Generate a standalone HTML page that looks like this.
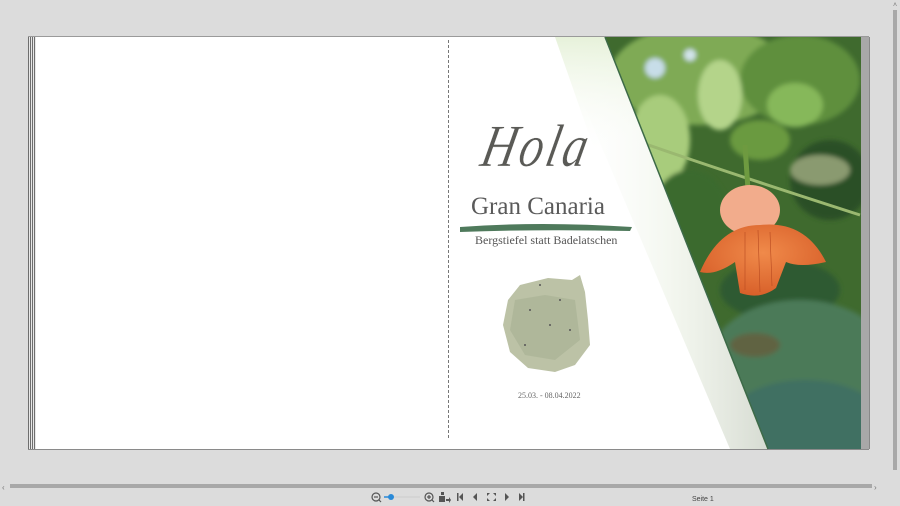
<!DOCTYPE html>
<html><head><meta charset="utf-8"><style>
html,body{margin:0;padding:0;width:900px;height:506px;background:#dcdcdc;overflow:hidden;font-family:"Liberation Sans",sans-serif;}
.abs{position:absolute;}
</style></head><body>
<div class="abs" style="left:28px;top:36px;width:841px;height:414px;background:#fff;border-top:1px solid #9a9a9a;border-bottom:1px solid #8a8a8a;box-sizing:border-box;"></div>
<div class="abs" style="left:28px;top:37px;width:8px;height:412px;background:repeating-linear-gradient(90deg,#6e6e6e 0 1px,#e8e8e8 1px 2px);"></div>
<div class="abs" style="left:448px;top:40px;height:398px;border-left:1px dashed #777;"></div>
<div class="abs" style="left:861px;top:37px;width:8px;height:412px;background:#a8a8a8;border-right:1px solid #888;"></div>
<svg class="abs" style="left:0;top:0" width="900" height="506">
<defs>
<linearGradient id="fade" x1="0" y1="0" x2="1" y2="0">
<stop offset="0" stop-color="#fff" stop-opacity="0"/>
<stop offset="0.55" stop-color="#eef3e8" stop-opacity="0.7"/>
<stop offset="1" stop-color="#d6dbd2"/>
</linearGradient>
<linearGradient id="fade2" x1="0" y1="0" x2="0" y2="1">
<stop offset="0" stop-color="#e4f0d6" stop-opacity="0.9"/>
<stop offset="0.5" stop-color="#fff" stop-opacity="0"/>
<stop offset="1" stop-color="#fff" stop-opacity="0"/>
</linearGradient>
<radialGradient id="fl" cx="0.5" cy="0.4" r="0.6"><stop offset="0" stop-color="#f08a4a"/><stop offset="1" stop-color="#d8602a"/></radialGradient>
<clipPath id="ph"><polygon points="605,37 861,37 861,449 768,449"/></clipPath>
<filter id="bl"><feGaussianBlur stdDeviation="2.5"/></filter>
</defs>
<polygon points="555,37 605,37 768,449 730,449" fill="url(#fade)"/>
<polygon points="555,37 605,37 700,280 640,280" fill="url(#fade2)"/>
<g clip-path="url(#ph)">
<rect x="600" y="37" width="262" height="412" fill="#3f6a2e"/>
<g filter="url(#bl)">
<ellipse cx="700" cy="75" rx="90" ry="50" fill="#7faa55"/>
<ellipse cx="800" cy="80" rx="60" ry="45" fill="#5f8f3c"/>
<circle cx="655" cy="68" r="10" fill="#c7dde8"/>
<circle cx="690" cy="55" r="6" fill="#d2e4ea"/>
<ellipse cx="660" cy="140" rx="30" ry="45" fill="#a8cc7c"/>
<ellipse cx="720" cy="95" rx="22" ry="35" fill="#b4d48a"/>
<ellipse cx="795" cy="105" rx="28" ry="22" fill="#86b85a"/>
<ellipse cx="760" cy="140" rx="30" ry="20" fill="#6a9a40"/>
<ellipse cx="830" cy="180" rx="40" ry="40" fill="#2c4f26"/>
<ellipse cx="690" cy="220" rx="40" ry="50" fill="#3a6a2e"/>
<ellipse cx="780" cy="290" rx="60" ry="30" fill="#2e5a30"/>
<ellipse cx="800" cy="360" rx="90" ry="60" fill="#4c7a58"/>
<ellipse cx="805" cy="425" rx="80" ry="45" fill="#3f7062"/>
<ellipse cx="755" cy="345" rx="25" ry="12" fill="#6a5a3a" opacity="0.7"/>
<ellipse cx="820" cy="170" rx="30" ry="15" fill="#8a9a70"/>
</g>
<path d="M640 142 Q720 170 860 215" stroke="#9ab870" stroke-width="3" fill="none"/>
<path d="M745 145 L748 190" stroke="#6e9a40" stroke-width="5"/>
<ellipse cx="750" cy="210" rx="30" ry="25" fill="#f2ac8c"/>
<path d="M700 272 Q720 225 760 225 Q805 220 826 262 Q800 268 786 262 L776 288 Q760 300 740 293 L735 262 Q715 276 700 272Z" fill="url(#fl)"/>
<g stroke="#b84a20" stroke-width="0.6"><line x1="745" y1="232" x2="745" y2="290"/><line x1="758" y1="230" x2="760" y2="292"/><line x1="770" y1="232" x2="772" y2="286"/></g>
</g>
<line x1="605" y1="37" x2="768" y2="449" stroke="#3d6a48" stroke-width="1.5"/>
<path d="M460 227 Q540 221 632 227 L630 231 Q540 229 460 232Z" fill="#4f7a5c"/>
<path d="M520 285 L548 278 L572 280 L580 275 L585 292 L588 320 L590 345 L575 365 L555 372 L528 368 L510 352 L503 325 L508 300Z" fill="#bcc2a6"/>
<path d="M515 300 L545 295 L575 300 L580 340 L555 360 L525 355 L510 330Z" fill="#aab296" opacity="0.7"/>
<g fill="#555"><circle cx="540" cy="285" r="1"/><circle cx="560" cy="300" r="1"/><circle cx="550" cy="325" r="1"/><circle cx="570" cy="330" r="1"/><circle cx="525" cy="345" r="1"/><circle cx="530" cy="310" r="1"/></g>
<rect x="893" y="10" width="4" height="460" fill="#a8a8a8"/>
<rect x="10" y="484" width="862" height="4" fill="#a8a8a8"/>
<text x="2" y="490" font-size="8" fill="#777">‹</text>
<text x="874" y="490" font-size="8" fill="#777">›</text>
<text x="893" y="7" font-size="7" fill="#777">˄</text>
<g stroke="#555" fill="none" stroke-width="1.2">
<circle cx="376" cy="497" r="4"/><line x1="374" y1="497" x2="378" y2="497"/><line x1="379" y1="500" x2="381" y2="502"/>
<circle cx="429" cy="497" r="4"/><line x1="427" y1="497" x2="431" y2="497"/><line x1="429" y1="495" x2="429" y2="499"/><line x1="432" y1="500" x2="434" y2="502"/>
</g>
<line x1="384" y1="497" x2="420" y2="497" stroke="#ccc" stroke-width="1"/>
<line x1="384" y1="497" x2="391" y2="497" stroke="#2a8ad8" stroke-width="1.5"/>
<circle cx="391" cy="497" r="3" fill="#2a8ad8"/>
<g fill="#555">
<rect x="441" y="492" width="3" height="3"/><rect x="439" y="496" width="6" height="6"/><path d="M446 499 h3 v-2 l2 3 l-2 3 v-2 h-3z"/>
<rect x="457" y="493" width="1.5" height="8"/><path d="M463 493 v8 l-4 -4z"/>
<path d="M477 493 v8 l-4 -4z"/>
<path d="M487 493 l3 0 l-3 3z M496 493 l-3 0 l3 3z M487 501 l3 0 l-3 -3z M496 501 l-3 0 l3 -3z"/>
<path d="M505 493 v8 l4 -4z"/>
<path d="M519 493 v8 l4 -4z"/><rect x="523" y="493" width="1.5" height="8"/>
</g>
<text x="692" y="501" font-size="7" fill="#444" font-family="Liberation Sans">Seite 1</text>
</svg>
<div class="abs" style="left:490px;top:112px;font-family:'Liberation Serif',serif;font-style:italic;font-size:48px;color:#5a5a56;transform:skewX(-12deg) scaleY(1.25);transform-origin:left top;letter-spacing:3px;-webkit-text-stroke:0.3px #fff;">Hola</div>
<div class="abs" style="left:471px;top:193px;font-family:'Liberation Serif',serif;font-size:25px;color:#5a5a5a;">Gran Canaria</div>
<div class="abs" style="left:475px;top:233px;font-family:'Liberation Serif',serif;font-size:12px;color:#555;">Bergstiefel statt Badelatschen</div>
<div class="abs" style="left:518px;top:391px;font-family:'Liberation Serif',serif;font-size:8px;color:#666;">25.03. - 08.04.2022</div>
</body></html>
